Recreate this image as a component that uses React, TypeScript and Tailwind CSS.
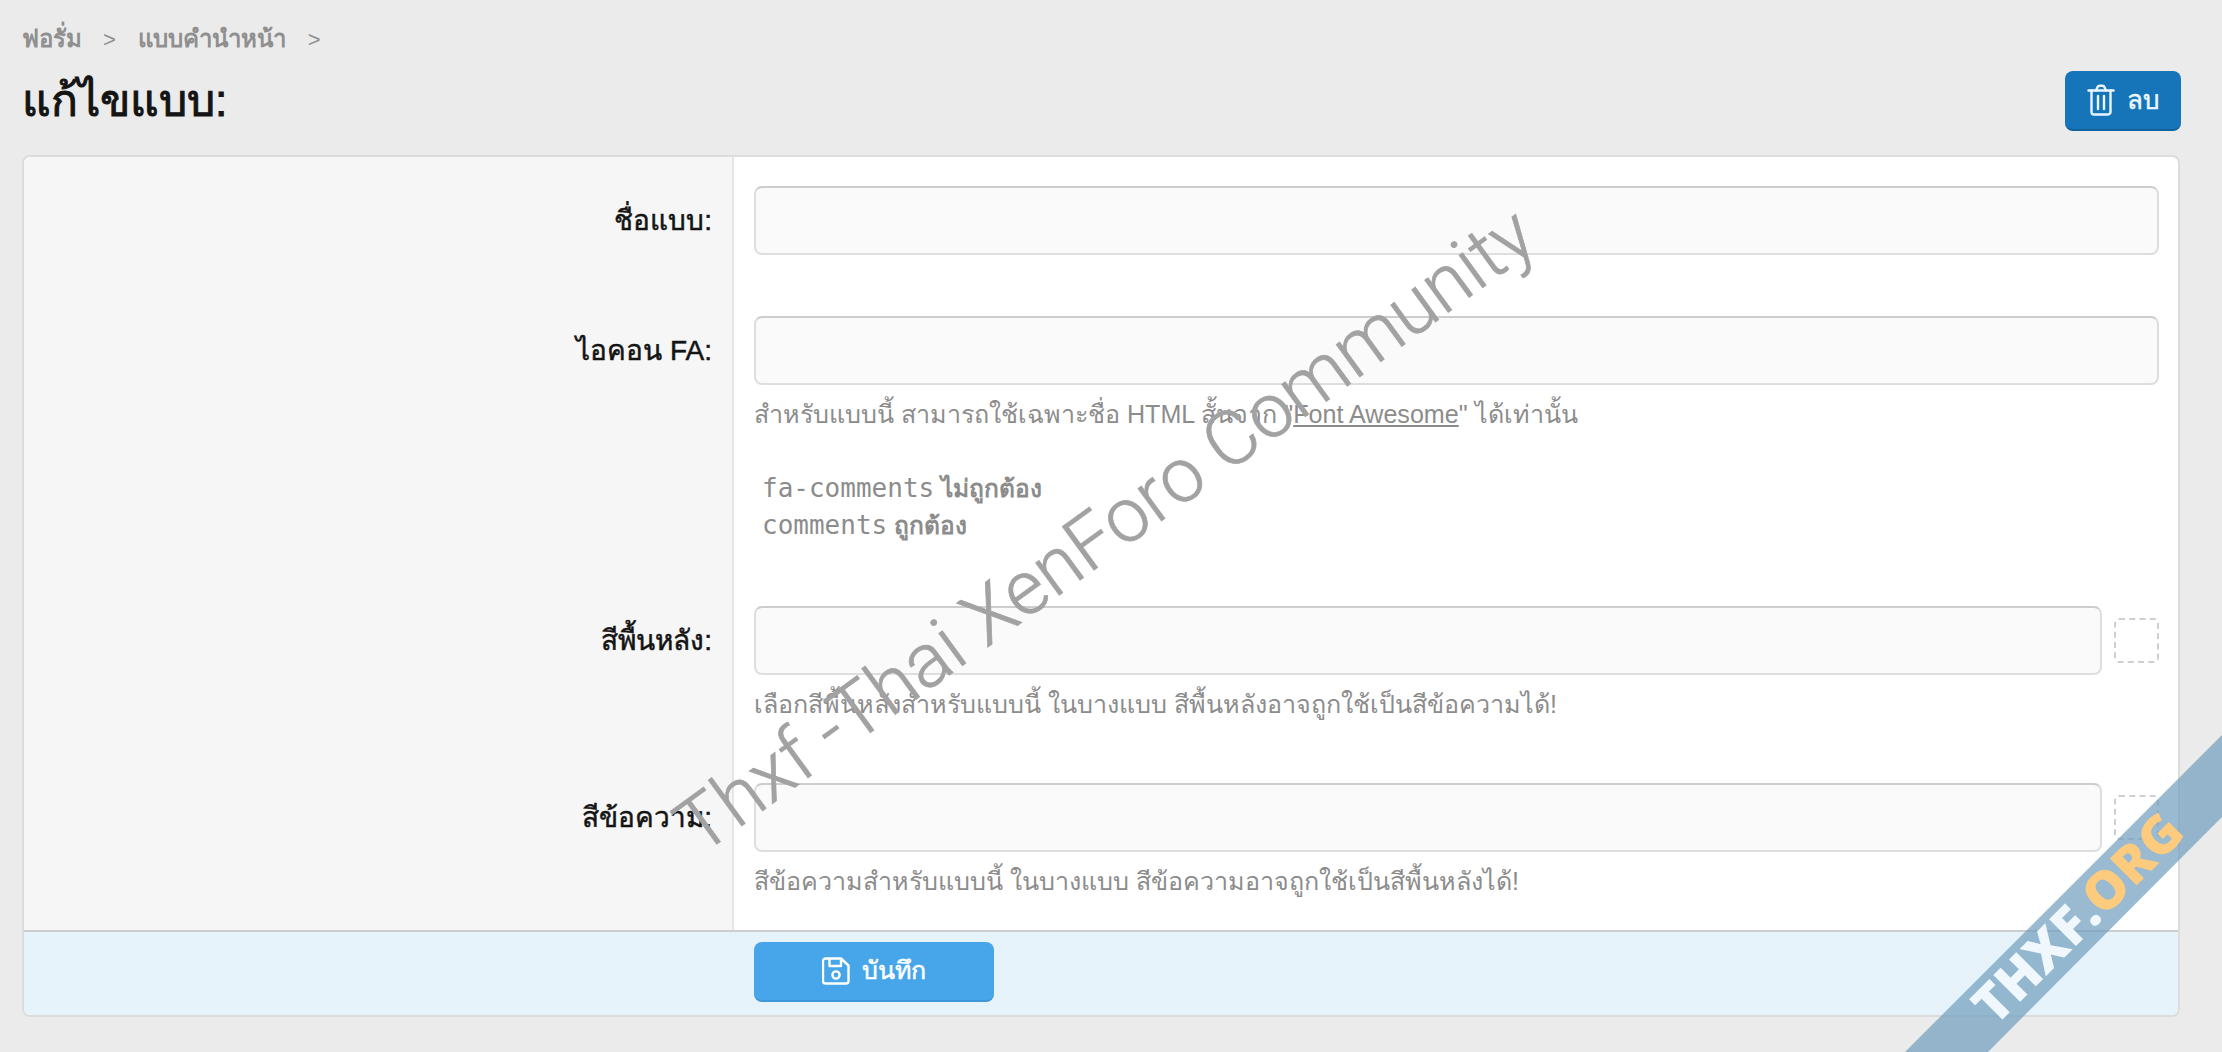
const font = '[font-family:"Liberation_Sans","Noto_Sans",sans-serif]';

function TrashIcon() {
  return (
    <svg width="28" height="32" viewBox="0 0 28 32" fill="none" stroke="#eaf6ff" strokeWidth="2.4" strokeLinecap="round" strokeLinejoin="round">
      <path d="M1.5 6.5h25" />
      <path d="M4.5 6.5v21.5a2.5 2.5 0 0 0 2.500 2.500h14a2.500 2.500 0 0 0 2.500-2.500V6.500" />
      <path d="M9 6.500l1.600-3.600a2 2 0 0 1 1.800-1.200h3.200a2 2 0 0 1 1.800 1.200L19 6.500" />
      <path d="M11 12v13M17 12v13" />
    </svg>
  );
}

function SaveIcon() {
  return (
    <svg width="28" height="28" viewBox="0 0 28 28" fill="none" stroke="#ffffff" strokeWidth="2.4" strokeLinejoin="round">
      <path d="M3.500 1.500h15.500l7.500 7v15.500a2.500 2.500 0 0 1-2.500 2.500h-20.500a2.500 2.500 0 0 1-2.500-2.500v-20a2.500 2.500 0 0 1 2.500-2.500z" />
      <path d="M7.500 1.500v7.500h11.500v-7.500" />
      <circle cx="14" cy="18" r="3.600" />
    </svg>
  );
}

function Row({ label, children, first }: { label: string; children: React.ReactNode; first?: boolean }) {
  return (
    <div className="flex">
      <div className={`w-[710px] shrink-0 bg-[#f6f6f6] border-r-2 border-[#e6e6e6] pr-[20px] text-right ${first ? 'pt-[29px]' : 'pt-[30px]'}`}>
        <div className="h-[69px] flex items-center justify-end text-[28px] text-[#141414] [-webkit-text-stroke:0.5px_#141414]">{label}</div>
      </div>
      <div className={`flex-1 pl-[20px] pr-[19px] ${first ? 'pt-[29px] pb-[31px]' : 'pt-[30px] pb-[30px]'}`}>{children}</div>
    </div>
  );
}

function Field({ swatch }: { swatch?: boolean }) {
  return (
    <div className="flex items-center gap-[12px]">
      <div className="flex-1 h-[69px] rounded-[8px] bg-[#fafafa] border-2 border-[#dedede] border-t-[#cdcdcd]" />
      {swatch && <div className="w-[45px] h-[45px] rounded-[5px] border-2 border-dashed border-[#cfcfcf]" />}
    </div>
  );
}

function Hint({ children }: { children: React.ReactNode }) {
  return <p className="mt-[11px] mb-[1px] h-[36px] leading-[36px] text-[25.1px] text-[#8c8c8c] whitespace-nowrap">{children}</p>;
}

export default function App() {
  return (
    <div className={`relative h-[1052px] overflow-hidden bg-[#ebebeb] ${font}`}>
      <div className="pl-[22px] pr-[42px] pt-[23px]">
        <div className="flex items-center h-[32px] text-[24px] font-bold text-[#8f8f8f]">
          <span>ฟอรั่ม</span>
          <span className="ml-[21px] mr-[22px] text-[22px] font-normal">&gt;</span>
          <span>แบบคำนำหน้า</span>
          <span className="ml-[22px] text-[22px] font-normal">&gt;</span>
        </div>
        <div className="flex items-center justify-between h-[70px]">
          <h1 className="text-[44.5px] leading-[70px] mt-[21px] text-[#141414] [-webkit-text-stroke:1px_#141414]">แก้ไขแบบ:</h1>
          <button className="w-[116px] h-[60px] mt-[22px] -mr-[1px] rounded-[8px] bg-[#1575b8] border-b-2 border-[#10629c] flex items-center justify-center gap-[12px] text-[26px] text-[#eaf6ff] [-webkit-text-stroke:0.5px_#eaf6ff]">
            <TrashIcon />
            <span>ลบ</span>
          </button>
        </div>
        <div className="mt-[30px] h-[862px] rounded-[8px] border-2 border-[#dcdcdc] bg-white overflow-hidden flex flex-col">
          <Row label="ชื่อแบบ:" first><Field /></Row>
          <Row label="ไอคอน FA:">
            <Field />
            <Hint>
              สำหรับแบบนี้ สามารถใช้เฉพาะชื่อ HTML สั้นจาก "<span className="underline">Font Awesome</span>" ได้เท่านั้น
            </Hint>
            <div className="mt-[38px] ml-[8px] text-[24.5px] leading-[37px] text-[#8c8c8c] h-[76px]">
              <div><code className="[font-family:'DejaVu_Sans_Mono',monospace] text-[26px]">fa-comments</code> <b>ไม่ถูกต้อง</b></div>
              <div><code className="[font-family:'DejaVu_Sans_Mono',monospace] text-[26px]">comments</code> <b>ถูกต้อง</b></div>
            </div>
          </Row>
          <Row label="สีพื้นหลัง:">
            <Field swatch />
            <Hint>เลือกสีพื้นหลังสำหรับแบบนี้ ในบางแบบ สีพื้นหลังอาจถูกใช้เป็นสีข้อความได้!</Hint>
          </Row>
          <Row label="สีข้อความ:">
            <Field swatch />
            <Hint>สีข้อความสำหรับแบบนี้ ในบางแบบ สีข้อความอาจถูกใช้เป็นสีพื้นหลังได้!</Hint>
          </Row>
          <div className="flex-1 bg-[#e7f3fb] border-t-2 border-[#cdcdcd] pl-[730px] pt-[10px]">
            <button className="w-[240px] h-[60px] rounded-[8px] bg-[#47a6e9] border-b-2 border-[#3d97d8] flex items-center justify-center gap-[12px] text-[25px] text-white [-webkit-text-stroke:0.5px_#ffffff]">
              <SaveIcon />
              <span>บันทึก</span>
            </button>
          </div>
        </div>
      </div>

      <div className="absolute left-[1105px] top-[530px] -translate-x-1/2 -translate-y-1/2 -rotate-[36deg] whitespace-nowrap text-[76px] font-light text-[#a2a2a2] [-webkit-text-stroke:0.7px_#a2a2a2] pointer-events-none [font-family:Roboto,sans-serif]">
        Thxf -Thai XenForo Community
      </div>

      <svg className="absolute left-[1900px] top-[730px] pointer-events-none" width="322" height="322" viewBox="0 0 322 322">
        <polygon points="5,322 322,5 322,87 88,322" fill="#6d9cbc" fillOpacity="0.7" />
        <text
          x="0"
          y="0"
          textAnchor="middle"
          transform="translate(191 201) rotate(-45)"
          fontFamily="Open Sans, sans-serif"
          fontWeight="800"
          fontSize="53"
          fill="#f1f8fd"
        >
          THXF.<tspan fill="#fdcb7e">ORG</tspan>
        </text>
      </svg>
    </div>
  );
}
